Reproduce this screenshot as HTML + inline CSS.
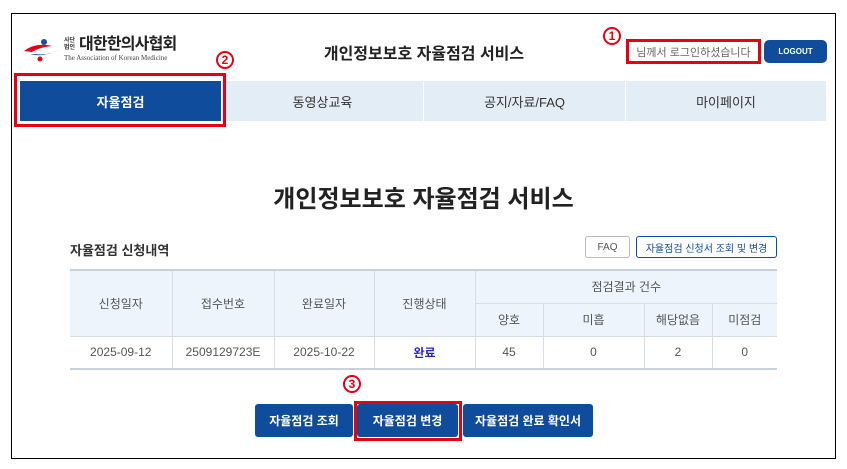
<!DOCTYPE html><html><head><meta charset="utf-8"><style>
*{margin:0;padding:0;box-sizing:border-box}
body{width:847px;height:469px;background:#fff;font-family:"Liberation Sans","Noto Sans CJK KR",sans-serif;position:relative;overflow:hidden;color:#222}
.a{position:absolute}
.frame{left:11px;top:13px;width:825px;height:446px;border:1px solid #000}
.tab{top:81px;height:40px;background:#e3edf5;font-size:13px;color:#333;display:flex;align-items:center;justify-content:center;border-right:1px solid #fff}
.red{border:3px solid #e60012}
.num{color:#e60012;width:18px;height:18px;border:2px solid #e60012;border-radius:50%;display:flex;align-items:center;justify-content:center;font-size:12px;font-weight:bold}
table{border-collapse:collapse;font-size:12px;color:#555}
td{text-align:center;border-left:1px solid #d5dde6;border-bottom:1px solid #d5dde6}
td:first-child{border-left:none}
.h td{background:#edf4fb}
.btn{top:404px;height:33px;background:#0f4c9c;color:#fff;font-size:12px;font-weight:bold;display:flex;align-items:center;justify-content:center;border-radius:3px}
</style></head><body>
<div class="a frame"></div>
<svg class="a" style="left:22px;top:38px" width="40" height="24" viewBox="0 0 40 24"><path d="M2 13 Q14 4 30 8 Q18 9 10 14Z" fill="#e60012"/><path d="M8 16 Q22 20 38 11 Q26 18 14 16Z" fill="#1f4aa0"/><circle cx="22" cy="4" r="3" fill="#1f4aa0"/><circle cx="18" cy="21" r="2.5" fill="#e60012"/></svg>
<div class="a" style="left:64px;top:38px;width:14px;font-size:6px;line-height:7px;font-weight:bold;color:#333;white-space:nowrap">사단<br>법인</div>
<div class="a" style="left:79px;top:36px;font-size:16px;line-height:18px;font-weight:bold;color:#222;letter-spacing:-0.8px;white-space:nowrap">대한한의사협회</div>
<div class="a" style="left:64px;top:54px;font-size:7px;line-height:8px;font-family:'Liberation Serif',serif;color:#444;white-space:nowrap">The Association of Korean Medicine</div>
<div class="a" style="left:300px;top:40px;width:248px;text-align:center;font-size:16px;font-weight:bold">개인정보보호 자율점검 서비스</div>
<div class="a num" style="left:603px;top:27px">1</div>
<div class="a red" style="left:626px;top:39px;width:135px;height:25px;font-size:11px;color:#666;display:flex;align-items:center;justify-content:center;white-space:nowrap">님께서 로그인하셨습니다</div>
<div class="a" style="left:764px;top:40px;width:63px;height:23px;background:#0f4c9c;color:#fff;border-radius:5px;font-size:8px;font-weight:bold;display:flex;align-items:center;justify-content:center">LOGOUT</div>
<div class="a tab" style="left:20px;width:202px;background:#0f4c9c;color:#fff;font-weight:bold">자율점검</div>
<div class="a tab" style="left:222px;width:202px">동영상교육</div>
<div class="a tab" style="left:424px;width:202px">공지/자료/FAQ</div>
<div class="a tab" style="left:626px;width:201px">마이페이지</div>
<div class="a red" style="left:14px;top:73px;width:212px;height:54px"></div>
<div class="a num" style="left:216px;top:51px">2</div>
<div class="a" style="left:0;width:847px;top:179px;text-align:center;font-size:24px;font-weight:bold;color:#222">개인정보보호 자율점검 서비스</div>
<div class="a" style="left:70px;top:240px;font-size:13px;font-weight:bold;color:#333">자율점검 신청내역</div>
<div class="a" style="left:585px;top:236px;width:45px;height:22px;border:1px solid #bbb;border-radius:3px;font-size:10px;color:#555;display:flex;align-items:center;justify-content:center">FAQ</div>
<div class="a" style="left:636px;top:236px;width:141px;height:22px;border:1px solid #0f4c9c;border-radius:3px;font-size:10px;color:#0f4c9c;display:flex;align-items:center;justify-content:center">자율점검 신청서 조회 및 변경</div>
<table class="a" style="left:70px;top:269px;width:707px;border-top:2px solid #c8d2de;border-bottom:2px solid #c8d2de">
<tr class="h" style="height:33px"><td rowspan="2" style="width:102px">신청일자</td><td rowspan="2" style="width:102px">접수번호</td><td rowspan="2" style="width:100px">완료일자</td><td rowspan="2" style="width:101px">진행상태</td><td colspan="4">점검결과 건수</td></tr>
<tr class="h" style="height:33px"><td style="border-left:1px solid #d5dde6;width:68px">양호</td><td style="width:101px">미흡</td><td style="width:68px">해당없음</td><td>미점검</td></tr>
<tr style="height:33px"><td>2025-09-12</td><td>2509129723E</td><td>2025-10-22</td><td style="color:#2424d0;font-weight:bold">완료</td><td>45</td><td>0</td><td>2</td><td>0</td></tr>
</table>
<div class="a num" style="left:343px;top:375px">3</div>
<div class="a btn" style="left:255px;width:98px">자율점검 조회</div>
<div class="a btn" style="left:357px;width:101px">자율점검 변경</div>
<div class="a red" style="left:354px;top:401px;width:108px;height:40px"></div>
<div class="a btn" style="left:463px;width:130px">자율점검 완료 확인서</div>
</body></html>
